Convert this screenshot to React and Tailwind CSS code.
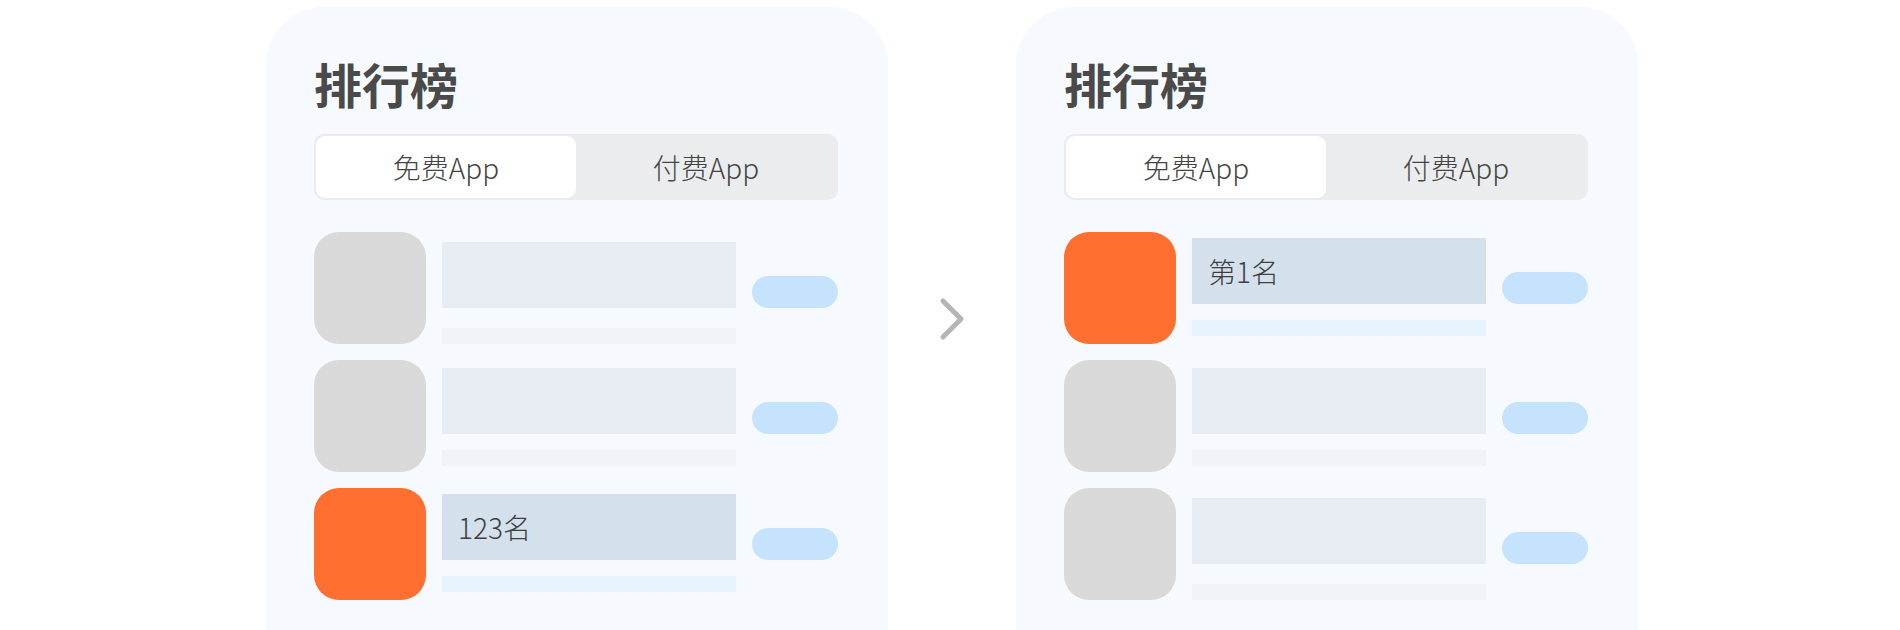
import React from "react";

const FONT = { fontFamily: '"Noto Sans CJK SC", "Noto Sans", sans-serif' };

function Row({ highlight, label, barMt, subGap }) {
  return (
    <div className="flex items-start">
      <div
        className={
          "w-[112px] h-[112px] rounded-[25px] shrink-0 " +
          (highlight ? "bg-[#ff7030]" : "bg-[#d9d9d9]")
        }
      />
      <div className="flex flex-col ml-4" style={{ marginTop: barMt }}>
        <div className="flex items-end">
          <div
            className={
              "w-[294px] h-[66px] flex items-center pl-4 " +
              (highlight ? "bg-[#d4e1ec]" : "bg-[#e7ecf3]")
            }
          >
            {label && (
              <span className="text-[28px] font-light text-[#3d3f42] leading-none">{label}</span>
            )}
          </div>
          <div className="ml-4 w-[86px] h-8 rounded-full bg-[#c6e3fd]" />
        </div>
        <div
          className={
            "w-[294px] h-4 " + (highlight ? "bg-[#e8f4fd]" : "bg-[#f0f4f8]")
          }
          style={{ marginTop: subGap }}
        />
      </div>
    </div>
  );
}

function Card({ rows }) {
  return (
    <div className="w-[622px] h-[700px] shrink-0 bg-[#f6fafe] rounded-t-[58px] pl-12 pr-[50px] pt-[52px]">
      <div className="text-[48px] leading-[48px] font-bold text-[#4a4a4a]">排行榜</div>
      <div className="mt-[27px] h-[66px] w-[524px] rounded-[10px] bg-[#ebecee] p-[2px] flex">
        <div className="w-[260px] h-[62px] rounded-[9px] bg-white flex items-center justify-center text-[28px] font-light text-[#444] leading-none">
          免费App
        </div>
        <div className="flex-1 flex items-center justify-center text-[28px] font-light text-[#444] leading-none">
          付费App
        </div>
      </div>
      <div className="mt-8 flex flex-col gap-4">
        {rows.map((r, i) => (
          <Row key={i} {...r} />
        ))}
      </div>
    </div>
  );
}

export default function App() {
  const left = [
    { highlight: false, barMt: 10, subGap: 20 },
    { highlight: false, barMt: 8, subGap: 16 },
    { highlight: true, label: "123名", barMt: 6, subGap: 16 },
  ];
  const right = [
    { highlight: true, label: "第1名", barMt: 6, subGap: 16 },
    { highlight: false, barMt: 8, subGap: 16 },
    { highlight: false, barMt: 10, subGap: 20 },
  ];
  return (
    <div className="w-[1900px] h-[630px] overflow-hidden bg-white flex pl-[266px] pt-[7px]" style={FONT}>
      <Card rows={left} />
      <div className="w-[128px] shrink-0 flex justify-center items-start pt-[290px]">
        <svg width="30" height="50" viewBox="0 0 30 50" fill="none">
          <path
            d="M6 4 L24 22 L6 40"
            stroke="#b5b5b5"
            strokeWidth="5"
            strokeLinecap="round"
            strokeLinejoin="round"
          />
        </svg>
      </div>
      <Card rows={right} />
    </div>
  );
}
